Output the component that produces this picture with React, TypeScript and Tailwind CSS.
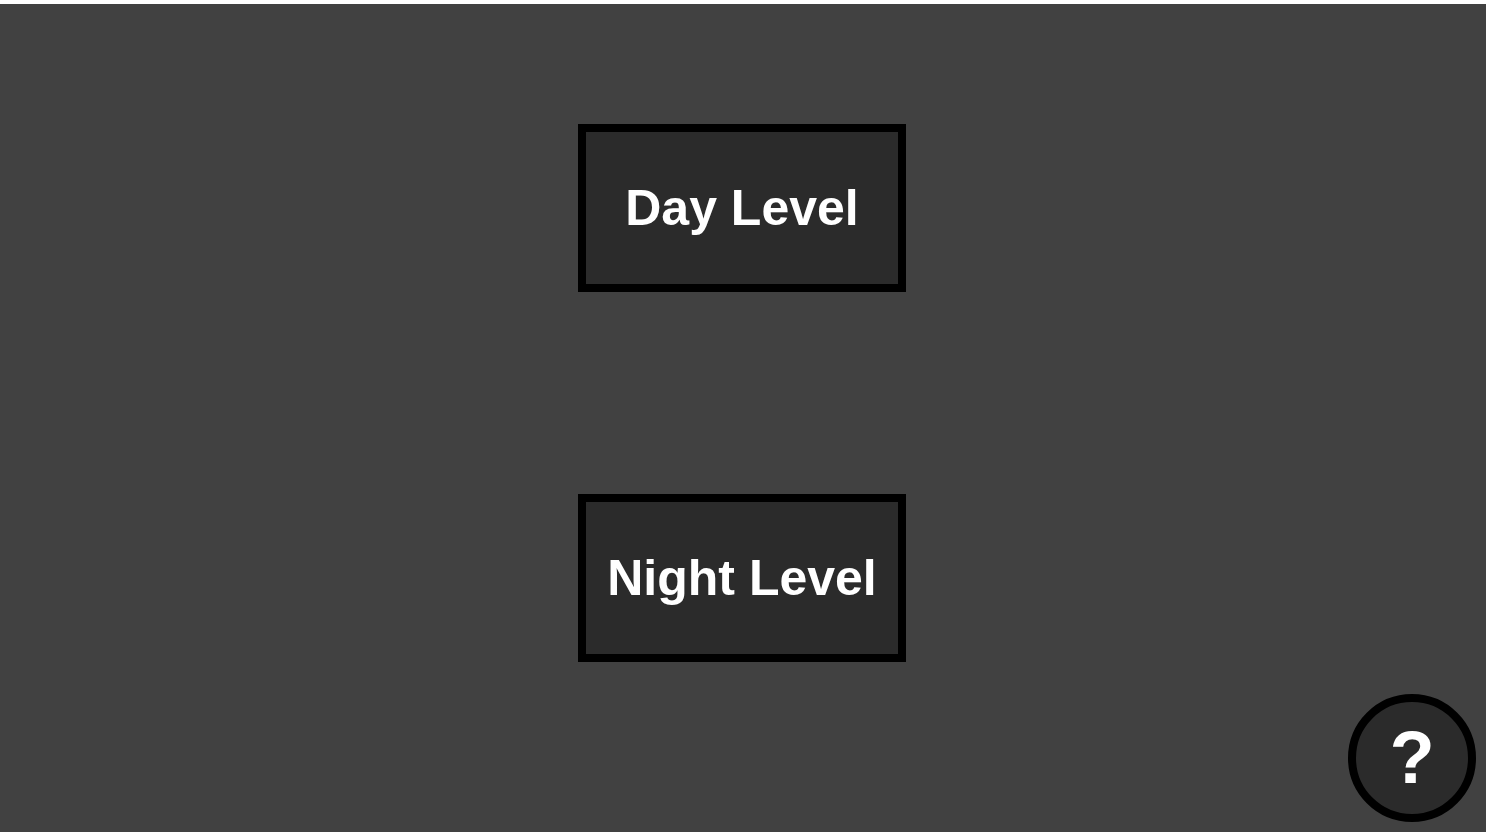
export default function App() {
  return (
    <div className="flex h-[832px] flex-col bg-white pt-[4px] font-['Liberation_Sans',Arial,sans-serif]">
      {/* level select */}
      <div className="relative flex flex-1 flex-col items-center gap-[202px] bg-[#414141] pt-[120px] pr-[2px]">
        <button className="flex h-[168px] w-[328px] items-center justify-center border-8 border-black bg-[#2b2b2b] text-[50px] font-bold text-white">
          Day Level
        </button>
        <button className="flex h-[168px] w-[328px] items-center justify-center border-8 border-black bg-[#2b2b2b] text-[50px] font-bold text-white">
          Night Level
        </button>

        {/* help */}
        <button className="absolute right-[10px] bottom-[10px] flex h-[128px] w-[128px] items-center justify-center rounded-full border-8 border-black bg-[#2b2b2b] text-[74px] font-bold leading-none text-white">
          ?
        </button>
      </div>
    </div>
  );
}
